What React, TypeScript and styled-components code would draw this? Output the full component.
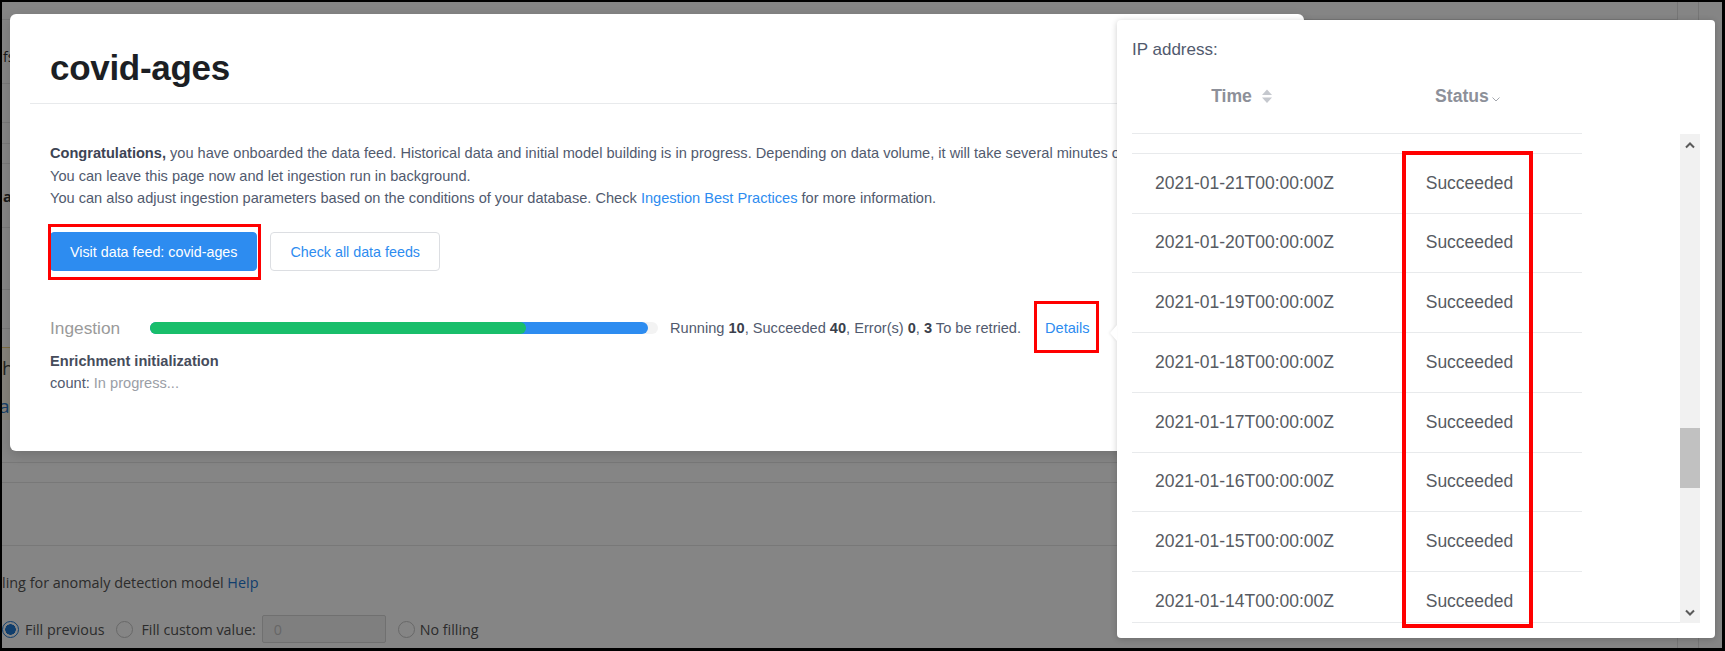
import React, { useLayoutEffect, useRef } from "react";
import styled, { createGlobalStyle, css } from "styled-components";

const GlobalStyle = createGlobalStyle`
  html, body { margin: 0; padding: 0; background: #000; }
  body { font-family: "Liberation Sans", Arial, sans-serif; }
  *, *::before, *::after { box-sizing: border-box; }
`;

const Screen = styled.div`
  position: relative;
  width: 1725px;
  height: 651px;
  border-style: solid;
  border-color: #000;
  border-width: 2px 3px 3px 2px;
  overflow: hidden;
  background: #fff;
`;

/* ---------- background page (under the overlay) ---------- */
const BgPage = styled.div`
  display: flex;
  width: 100%;
  height: 100%;
  font-family: "Open Sans", "Liberation Sans", sans-serif;
  color: #333;
`;

const BgMain = styled.div`
  flex: 1;
  display: flex;
  flex-direction: column;
  overflow: hidden;
`;

const BgRow = styled.div<{ $h: number; $pad?: number; $line?: boolean }>`
  flex: none;
  height: ${(p) => p.$h}px;
  padding-top: ${(p) => p.$pad ?? 0}px;
  padding-left: 1px;
  display: flex;
  align-items: center;
  font-size: 14px;
  white-space: nowrap;
  border-bottom: ${(p) => (p.$line === false ? "none" : "1px solid #e6e6e6")};
`;

const BgStrong = styled.span`
  font-weight: 700;
  font-size: 15px;
`;

const BgNotice = styled.div`
  flex: none;
  height: 73px;
  border-top: 1px solid #f0d27e;
  background: #fffaea;
  padding: 9px 0 0 0;
  display: flex;
  flex-direction: column;
  gap: 16px;
  white-space: nowrap;
`;

const BgNoticeText = styled.span`
  font-size: 19px;
  line-height: 22px;
  color: #444;
`;

const BgNoticeLink = styled.span`
  font-size: 19px;
  line-height: 22px;
  color: #2b78c8;
  margin-left: -3px;
`;

const BgLabel = styled.div`
  margin-top: 26px;
  line-height: 22px;
  font-size: 14.4px;
  color: #555;
  white-space: nowrap;
`;

const BgHelp = styled.span`
  color: #1f78d1;
`;

const BgRadioRow = styled.div`
  margin-top: 21px;
  height: 28px;
  display: flex;
  align-items: center;
  font-size: 14.3px;
  color: #555;
  white-space: nowrap;
`;

const BgRadio = styled.span<{ $checked?: boolean; $gap: number }>`
  flex: none;
  width: 17px;
  height: 17px;
  border-radius: 50%;
  margin-left: ${(p) => p.$gap}px;
  border: 1px solid ${(p) => (p.$checked ? "#1f78d1" : "#c8c8c8")};
  background: #fff;
  ${(p) =>
    p.$checked &&
    css`
      background: radial-gradient(circle, #1f78d1 0 5px, #fff 5.5px);
    `}
`;

const BgRadioLabel = styled.span<{ $gap: number }>`
  margin-left: ${(p) => p.$gap}px;
`;

const BgInput = styled.span`
  flex: none;
  width: 124px;
  height: 28px;
  margin-left: 6px;
  border: 1px solid #d6d6d6;
  border-radius: 2px;
  background: #f4f4f4;
  color: #c4c4c4;
  padding-left: 11px;
  display: flex;
  align-items: center;
`;

const BgRail = styled.div`
  flex: none;
  width: 45px;
  display: flex;
`;

const BgRailCol = styled.div<{ $w: number }>`
  width: ${(p) => p.$w}px;
  flex: none;
  border-left: 1px solid #e2e2e2;
`;

const Overlay = styled.div`
  position: absolute;
  inset: 0;
  background: rgba(0, 0, 0, 0.48);
`;

/* ---------- modal ---------- */
const Modal = styled.section`
  position: absolute;
  left: 8px;
  top: 12px;
  width: 1294px;
  height: 437px;
  background: #fff;
  border-radius: 6px;
  box-shadow: 0 4px 12px rgba(0, 0, 0, 0.15);
  overflow: hidden;
`;

const ModalHeader = styled.header`
  margin: 0 20px;
  padding: 34px 20px 15px;
  border-bottom: 1px solid #e8eaec;
`;

const Title = styled.h1`
  margin: 0;
  font-size: 35px;
  line-height: 40px;
  font-weight: 700;
  letter-spacing: -0.3px;
  color: #1c1f24;
`;

const ModalBody = styled.div`
  padding: 38px 40px 0;
`;

const Intro = styled.div`
  font-size: 14.6px;
  line-height: 22.5px;
  color: #515a6e;
  white-space: nowrap;
`;

const Strong = styled.b`
  color: #3d4454;
`;

const Link = styled.a`
  color: #2d8cf0;
  text-decoration: none;
`;

const ButtonRow = styled.div`
  margin-top: 22.5px;
  display: flex;
  gap: 13px;
`;

const marked = css<{ $mark?: string }>`
  position: relative;
  &::after {
    content: "";
    position: absolute;
    inset: ${(p) => p.$mark};
    border: 3px solid #ff0000;
    pointer-events: none;
  }
`;

const Button = styled.button<{ $primary?: boolean; $mark?: string }>`
  height: 39px;
  padding: 0 19px;
  border-radius: 4px;
  font-family: "Liberation Sans", Arial, sans-serif;
  font-size: 14.3px;
  cursor: pointer;
  border: 1px solid ${(p) => (p.$primary ? "#2d8cf0" : "#dcdee2")};
  background: ${(p) => (p.$primary ? "#2d8cf0" : "#fff")};
  color: ${(p) => (p.$primary ? "#fff" : "#2d8cf0")};
  ${(p) => p.$mark && marked}
`;

const ProgressRow = styled.div`
  margin-top: 45px;
  height: 24px;
  display: flex;
  align-items: center;
  white-space: nowrap;
`;

const ProgressLabel = styled.span`
  flex: none;
  width: 100px;
  font-size: 17.3px;
  color: #9a9a9a;
`;

const Track = styled.div`
  flex: none;
  width: 508px;
  height: 12px;
  border-radius: 6px;
  background: #f3f3f3;
  display: flex;
`;

const Fill = styled.div<{ $color: string }>`
  height: 100%;
  border-radius: 6px;
  background: ${(p) => p.$color};
  display: flex;
`;

const ProgressText = styled.span`
  margin-left: 12px;
  font-size: 14.6px;
  color: #515a6e;
  b {
    color: #3a3f4b;
  }
`;

const DetailsLink = styled.a<{ $mark?: string }>`
  display: inline-block;
  margin-left: 24px;
  line-height: 20px;
  font-size: 14.6px;
  color: #2d8cf0;
  text-decoration: none;
  ${marked}
`;

const Enrichment = styled.div`
  margin-top: 10px;
  line-height: 22px;
  font-size: 14.6px;
  font-weight: 700;
  color: #464c5b;
`;

const CountLine = styled.div`
  line-height: 22px;
  font-size: 14.6px;
  color: #515a6e;
`;

const Muted = styled.span`
  color: #9a9ea6;
`;

/* ---------- popover ---------- */
const Popover = styled.aside`
  position: absolute;
  left: 1115px;
  top: 18px;
  width: 598px;
  height: 618px;
  background: #fff;
  border-radius: 4px;
  box-shadow: 0 1px 6px rgba(0, 0, 0, 0.2);
  padding: 18px 15px 15px;
`;

const PopArrow = styled.span`
  position: absolute;
  left: -7px;
  top: 305px;
  width: 0;
  height: 0;
  border-top: 8px solid transparent;
  border-bottom: 8px solid transparent;
  border-right: 7px solid #fff;
  filter: drop-shadow(-1px 0 1px rgba(0, 0, 0, 0.08));
`;

const IpLabel = styled.div`
  font-size: 17px;
  line-height: 24px;
  color: #515a6e;
`;

const TableHead = styled.div`
  width: 450px;
  height: 72px;
  display: grid;
  grid-template-columns: 1fr 1fr;
  border-bottom: 1px solid #e8eaec;
  padding-bottom: 3px;
`;

const HeadCell = styled.div<{ $gap: number; $shift: number }>`
  display: flex;
  align-items: center;
  justify-content: center;
  gap: ${(p) => p.$gap}px;
  padding-right: ${(p) => p.$shift}px;
  font-weight: 700;
  font-size: 17.6px;
  color: #8d9099;
`;

const SortDown = styled.svg`
  margin-top: 7px;
`;

const BodyWrap = styled.div`
  display: flex;
  height: 489px;
`;

const Viewport = styled.div`
  width: 548px;
  height: 489px;
  border-bottom: 1px solid #e8eaec;
  overflow: hidden;
`;

const Row = styled.div`
  width: 450px;
  height: 59.75px;
  display: grid;
  grid-template-columns: 1fr 1fr;
  border-bottom: 1px solid #e8eaec;
`;

const Cell = styled.div`
  display: flex;
  align-items: center;
  justify-content: center;
  font-size: 17.5px;
  color: #575b62;
`;

const Scrollbar = styled.div`
  position: relative;
  width: 20px;
  height: 489px;
  background: #f1f1f1;
  display: flex;
  flex-direction: column;
  justify-content: space-between;
`;

const ScrollArrow = styled.div`
  height: 22px;
  display: flex;
  align-items: center;
  justify-content: center;
`;

const Thumb = styled.div`
  position: absolute;
  left: 0;
  width: 20px;
  height: 60px;
  background: #c1c1c1;
`;

const ColumnMark = styled.div`
  position: absolute;
  left: 285px;
  top: 131px;
  width: 131px;
  height: 477px;
  border: 4px solid #ff0000;
  pointer-events: none;
`;

const dates = Array.from({ length: 14 }, (_, i) => {
  const d = 22 - i;
  return `2021-01-${String(d).padStart(2, "0")}T00:00:00Z`;
});

function StatusTable() {
  const ref = useRef<HTMLDivElement>(null);
  useLayoutEffect(() => {
    if (ref.current) ref.current.scrollTop = 40;
  }, []);
  return (
    <>
      <TableHead>
        <HeadCell $gap={9} $shift={5}>
          Time
          <svg width="12" height="17" viewBox="0 0 12 17">
            <polygon points="1,7 6,1.5 11,7" fill="#c5c8ce" />
            <polygon points="1,9.5 6,15 11,9.5" fill="#c5c8ce" />
          </svg>
        </HeadCell>
        <HeadCell $gap={3} $shift={4}>
          Status
          <SortDown width="8" height="5" viewBox="0 0 8 5">
            <path d="M0.5 0.5 L4 4 L7.5 0.5" fill="none" stroke="#a3a6ad" strokeWidth="1" />
          </SortDown>
        </HeadCell>
      </TableHead>
      <BodyWrap>
        <Viewport ref={ref}>
          {dates.map((d) => (
            <Row key={d}>
              <Cell>{d}</Cell>
              <Cell>Succeeded</Cell>
            </Row>
          ))}
        </Viewport>
        <Scrollbar>
          <ScrollArrow>
            <svg width="10" height="7" viewBox="0 0 10 7">
              <path d="M1 5.5 L5 1.5 L9 5.5" fill="none" stroke="#5a5a5a" strokeWidth="2" />
            </svg>
          </ScrollArrow>
          <Thumb style={{ top: 294 }} />
          <ScrollArrow>
            <svg width="10" height="7" viewBox="0 0 10 7">
              <path d="M1 1.5 L5 5.5 L9 1.5" fill="none" stroke="#5a5a5a" strokeWidth="2" />
            </svg>
          </ScrollArrow>
        </Scrollbar>
      </BodyWrap>
    </>
  );
}

function BackgroundPage() {
  return (
    <BgPage>
      <BgMain>
        <BgRow $h={18} />
        <BgRow $h={64} $pad={10}>fs</BgRow>
        <BgRow $h={39} />
        <BgRow $h={21} />
        <BgRow $h={20} />
        <BgRow $h={64}>
          <BgStrong>a</BgStrong>
        </BgRow>
        <BgRow $h={62} />
        <BgRow $h={39} />
        <BgRow $h={18} $line={false} />
        <BgNotice>
          <BgNoticeText>h</BgNoticeText>
          <BgNoticeLink>at</BgNoticeLink>
        </BgNotice>
        <BgRow $h={43} />
        <BgRow $h={20} />
        <BgRow $h={63} />
        <BgLabel>
          ling for anomaly detection model <BgHelp>Help</BgHelp>
        </BgLabel>
        <BgRadioRow>
          <BgRadio $checked $gap={0} />
          <BgRadioLabel $gap={6}>Fill previous</BgRadioLabel>
          <BgRadio $gap={12} />
          <BgRadioLabel $gap={8}>Fill custom value:</BgRadioLabel>
          <BgInput>0</BgInput>
          <BgRadio $gap={12} />
          <BgRadioLabel $gap={5}>No filling</BgRadioLabel>
        </BgRadioRow>
      </BgMain>
      <BgRail>
        <BgRailCol $w={21} />
        <BgRailCol $w={24} />
      </BgRail>
    </BgPage>
  );
}

export default function App() {
  const successPct = 74;
  const totalPct = 98;
  return (
    <>
      <GlobalStyle />
      <Screen>
        <BackgroundPage />
        <Overlay />
        <Modal>
          <ModalHeader>
            <Title>covid-ages</Title>
          </ModalHeader>
          <ModalBody>
            <Intro>
              <div>
                <Strong>Congratulations,</Strong> you have onboarded the data feed. Historical data and
                initial model building is in progress. Depending on data volume, it will take several
                minutes or hours to complete.
              </div>
              <div>You can leave this page now and let ingestion run in background.</div>
              <div>
                You can also adjust ingestion parameters based on the conditions of your database. Check{" "}
                <Link href="#">Ingestion Best Practices</Link> for more information.
              </div>
            </Intro>
            <ButtonRow>
              <Button $primary $mark="-9px -5px -10px -3px">
                Visit data feed: covid-ages
              </Button>
              <Button>Check all data feeds</Button>
            </ButtonRow>
            <ProgressRow>
              <ProgressLabel>Ingestion</ProgressLabel>
              <Track>
                <Fill $color="#2d8cf0" style={{ width: `${totalPct}%` }}>
                  <Fill $color="#19be6b" style={{ width: `${(successPct / totalPct) * 100}%` }} />
                </Fill>
              </Track>
              <ProgressText>
                Running <b>10</b>, Succeeded <b>40</b>, Error(s) <b>0</b>, <b>3</b> To be retried.
              </ProgressText>
              <DetailsLink href="#" $mark="-17px -9px -15px -11px">
                Details
              </DetailsLink>
            </ProgressRow>
            <Enrichment>Enrichment initialization</Enrichment>
            <CountLine>
              count: <Muted>In progress...</Muted>
            </CountLine>
          </ModalBody>
        </Modal>
        <Popover>
          <PopArrow />
          <IpLabel>IP address:</IpLabel>
          <StatusTable />
          <ColumnMark />
        </Popover>
      </Screen>
    </>
  );
}
